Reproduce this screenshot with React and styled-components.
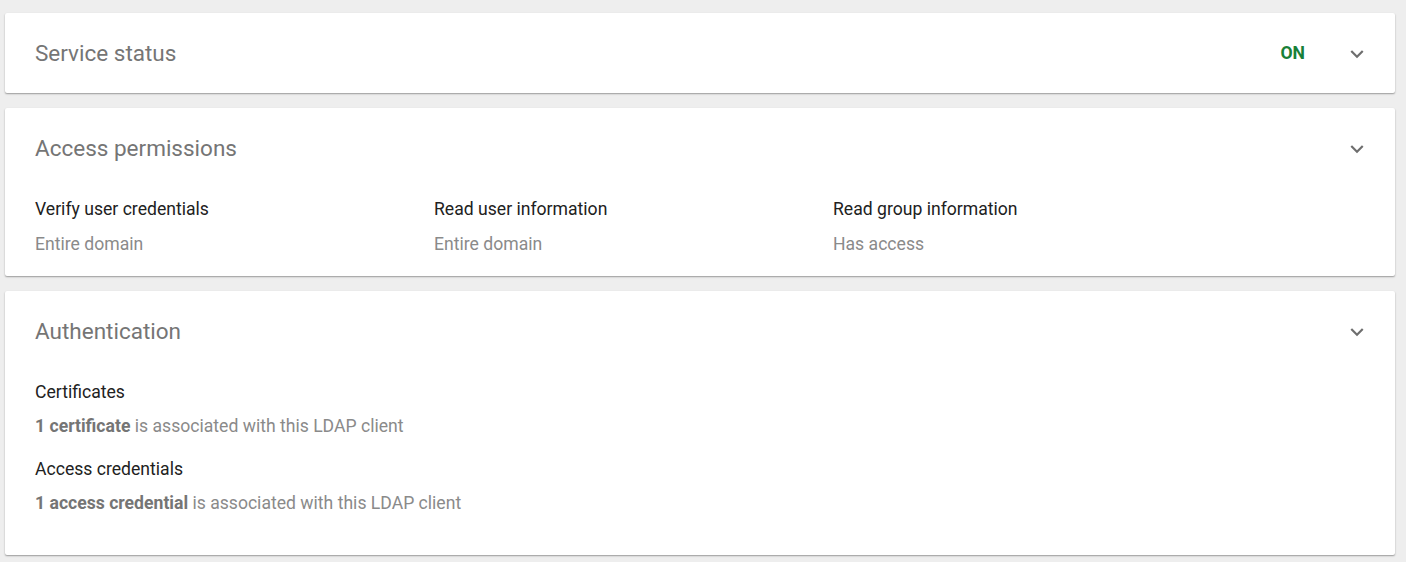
import React from "react";
import styled, { createGlobalStyle } from "styled-components";

const Global = createGlobalStyle`
  html, body { margin: 0; padding: 0; background: #eeeeee; }
  body { font-family: Roboto, "Noto Sans", Arial, sans-serif; -webkit-font-smoothing: antialiased; }
`;

const Page = styled.div`
  display: flex;
  flex-direction: column;
  gap: 15px;
  padding: 13px 11px 7px 5px;
`;

const Card = styled.section`
  background: #fff;
  border-radius: 2px;
  box-shadow: 0 1px 2px rgba(0, 0, 0, 0.28), 0 1px 1px rgba(0, 0, 0, 0.1);
`;

const Header = styled.div`
  height: 80px;
  display: flex;
  align-items: center;
  padding: 0 25px 0 30px;
`;

const Title = styled.h2`
  flex: 1;
  margin: 0;
  font-size: 22.5px;
  font-weight: 400;
  color: #757575;
`;

const Status = styled.span`
  font-size: 17.6px;
  font-weight: 700;
  color: #188038;
  margin-right: 39px;
`;

const Chevron = styled.svg`
  width: 26px;
  height: 26px;
  fill: #6e6e6e;
  display: block;
  margin-top: 2px;
`;

const Body = styled.div`
  padding: 9px 30px ${(p) => p.$bottom}px;
`;

const Columns = styled.div`
  display: grid;
  grid-template-columns: repeat(3, 399px);
`;

const Item = styled.div`
  display: flex;
  flex-direction: column;
  gap: ${(p) => p.$gap}px;
`;

const Stack = styled.div`
  display: flex;
  flex-direction: column;
  gap: 19px;
`;

const Label = styled.div`
  font-size: 17.6px;
  line-height: 24px;
  color: #212121;
`;

const Value = styled.div`
  font-size: 17.6px;
  line-height: 24px;
  color: #8a8a8a;
  b { font-weight: 700; color: #757575; }
`;

const ExpandMore = () => (
  <Chevron viewBox="0 0 24 24">
    <path d="M16.59 8.59L12 13.17 7.41 8.59 6 10l6 6 6-6z" />
  </Chevron>
);

const permissions = [
  ["Verify user credentials", "Entire domain"],
  ["Read user information", "Entire domain"],
  ["Read group information", "Has access"],
];

export default function App() {
  return (
    <>
      <Global />
      <Page>
        <Card>
          <Header>
            <Title>Service status</Title>
            <Status>ON</Status>
            <ExpandMore />
          </Header>
        </Card>

        <Card>
          <Header>
            <Title>Access permissions</Title>
            <ExpandMore />
          </Header>
          <Body $bottom={20}>
            <Columns>
              {permissions.map(([label, value]) => (
                <Item key={label} $gap={11}>
                  <Label>{label}</Label>
                  <Value>{value}</Value>
                </Item>
              ))}
            </Columns>
          </Body>
        </Card>

        <Card>
          <Header>
            <Title>Authentication</Title>
            <ExpandMore />
          </Header>
          <Body $bottom={40}>
            <Stack>
              <Item $gap={10}>
                <Label>Certificates</Label>
                <Value>
                  <b>1 certificate</b> is associated with this LDAP client
                </Value>
              </Item>
              <Item $gap={10}>
                <Label>Access credentials</Label>
                <Value>
                  <b>1 access credential</b> is associated with this LDAP client
                </Value>
              </Item>
            </Stack>
          </Body>
        </Card>
      </Page>
    </>
  );
}
